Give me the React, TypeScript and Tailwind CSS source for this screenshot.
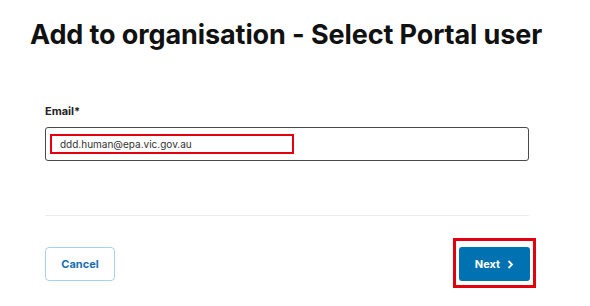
export default function App() {
  return (
    <div className="min-h-[306px] w-[590px] bg-white font-['Inter',sans-serif] text-[#111]">
      <h1 className="pl-[30px] pt-[20px] text-[27px] font-bold leading-[30px] tracking-[-0.1px]">
        Add to organisation - Select Portal user
      </h1>

      <div className="pl-[45px] pr-[61px]">
        <label className="mt-[54px] block text-[11px] font-bold leading-[14px] text-[#222]">
          Email*
        </label>
        <div className="mt-[9px] flex h-[34px] items-center rounded-[3px] border-[1.5px] border-[#4a4a4a] pl-[4px]">
          <span className="flex h-[20px] w-[244px] items-center border-2 border-[#e3000f] pl-[8px] text-[10px] text-[#333]">
            ddd.human@epa.vic.gov.au
          </span>
        </div>

        <div className="mt-[54px] h-px bg-[#ececec]" />

        <div className="mt-[22px] flex items-start justify-between">
          <button className="mt-[9px] h-[34px] w-[70px] rounded-[4px] border border-[#a9d0ea] text-[11px] font-bold text-[#1a6fae]">
            Cancel
          </button>
          <div className="-mr-[7px] border-[3px] border-[#e3000f] px-[3px] pb-[4px] pt-[6px]">
            <button className="flex h-[34px] w-[71px] items-center justify-center gap-[7px] rounded-[3px] bg-[#0072b1] text-[11px] font-bold text-white">
              Next
              <svg width="7" height="9" viewBox="0 0 7 9" fill="none">
                <path d="M1.5 1 L5 4.5 L1.5 8" stroke="white" strokeWidth="1.8" />
              </svg>
            </button>
          </div>
        </div>
      </div>
    </div>
  );
}
